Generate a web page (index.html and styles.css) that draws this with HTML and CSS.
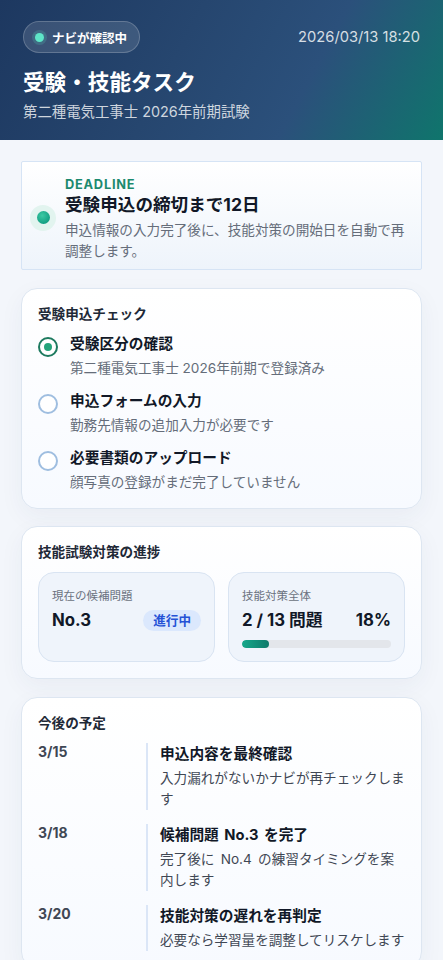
FILE: index.html
```html
<!DOCTYPE html>
<html lang="ja">
<head>
<meta charset="utf-8">
<meta name="viewport" content="width=device-width, initial-scale=1">
<title>受験・技能タスク</title>
<link rel="stylesheet" href="styles.css">
</head>
<body>
<header class="hero">
  <div class="hero-top">
    <div class="status-pill"><span class="status-dot"></span><span>ナビが確認中</span></div>
    <div class="hero-date">2026/03/13 18:20</div>
  </div>
  <h1 class="hero-title">受験・技能タスク</h1>
  <p class="hero-sub">第二種電気工事士 2026年前期試験</p>
</header>

<main class="content">
  <section class="deadline">
    <div class="deadline-mark"><span class="deadline-dot"></span></div>
    <div class="deadline-body">
      <div class="deadline-label">DEADLINE</div>
      <div class="deadline-title">受験申込の締切まで12日</div>
      <p class="deadline-desc">申込情報の入力完了後に、技能対策の開始日を自動で再調整します。</p>
    </div>
  </section>

  <section class="card">
    <h2 class="card-title">受験申込チェック</h2>
    <ul class="checklist">
      <li class="check-item">
        <span class="check-circle is-done"></span>
        <div>
          <div class="item-title">受験区分の確認</div>
          <div class="item-desc">第二種電気工事士 2026年前期で登録済み</div>
        </div>
      </li>
      <li class="check-item">
        <span class="check-circle"></span>
        <div>
          <div class="item-title">申込フォームの入力</div>
          <div class="item-desc">勤務先情報の追加入力が必要です</div>
        </div>
      </li>
      <li class="check-item">
        <span class="check-circle"></span>
        <div>
          <div class="item-title">必要書類のアップロード</div>
          <div class="item-desc">顔写真の登録がまだ完了していません</div>
        </div>
      </li>
    </ul>
  </section>

  <section class="card">
    <h2 class="card-title">技能試験対策の進捗</h2>
    <div class="stats">
      <div class="stat">
        <div class="stat-label">現在の候補問題</div>
        <div class="stat-row">
          <span class="stat-value">No.3</span>
          <span class="tag">進行中</span>
        </div>
      </div>
      <div class="stat">
        <div class="stat-label">技能対策全体</div>
        <div class="stat-row">
          <span class="stat-value">2 / 13 問題</span>
          <span class="stat-value">18%</span>
        </div>
        <div class="bar"><div class="bar-fill" style="width:18%"></div></div>
      </div>
    </div>
  </section>

  <section class="card">
    <h2 class="card-title">今後の予定</h2>
    <ol class="schedule">
      <li class="sched-row">
        <div class="sched-date">3/15</div>
        <div class="sched-body">
          <div class="item-title">申込内容を最終確認</div>
          <div class="sched-desc">入力漏れがないかナビが再チェックします</div>
        </div>
      </li>
      <li class="sched-row">
        <div class="sched-date">3/18</div>
        <div class="sched-body">
          <div class="item-title">候補問題 No.3 を完了</div>
          <div class="sched-desc">完了後に No.4 の練習タイミングを案内します</div>
        </div>
      </li>
      <li class="sched-row">
        <div class="sched-date">3/20</div>
        <div class="sched-body">
          <div class="item-title">技能対策の遅れを再判定</div>
          <div class="sched-desc">必要なら学習量を調整してリスケします</div>
        </div>
      </li>
    </ol>
  </section>
</main>
</body>
</html>
```

FILE: styles.css
```css
* { box-sizing: border-box; }

body {
  margin: 0;
  background: #f3f6fb;
  font-family: Inter, "Noto Sans CJK JP", sans-serif;
  color: #111827;
}

.hero {
  padding: 21px 23px 18px 23px;
  background: linear-gradient(118deg, #1d3860 0%, #26466f 40%, #2b507b 68%, #0f756c 100%);
  color: #fff;
}

.hero-top {
  display: flex;
  justify-content: space-between;
  align-items: center;
}

.status-pill {
  display: flex;
  align-items: center;
  gap: 8px;
  height: 32px;
  padding: 0 12px 0 11px;
  border-radius: 16px;
  background: rgba(255, 255, 255, 0.12);
  border: 1px solid rgba(255, 255, 255, 0.2);
  font-size: 12.5px;
  font-weight: 700;
}

.status-dot {
  width: 9px;
  height: 9px;
  border-radius: 50%;
  background: #5ee6c8;
  box-shadow: 0 0 0 3px rgba(94, 230, 200, 0.18);
}

.hero-date {
  font-size: 14.7px;
  color: rgba(255, 255, 255, 0.82);
}

.hero-title {
  margin: 14px 0 0;
  font-size: 21.6px;
  line-height: 30px;
  font-weight: 700;
}

.hero-sub {
  margin: 5px 0 0;
  font-size: 14.4px;
  line-height: 20px;
  color: rgba(255, 255, 255, 0.78);
}

.content {
  display: flex;
  flex-direction: column;
  gap: 17.5px;
  padding: 21px 21px 30px;
}

.deadline {
  display: flex;
  align-items: center;
  gap: 9px;
  padding: 15px 16px 7px 8px;
  border: 1px solid #d6e4f5;
  border-radius: 2px;
  background: linear-gradient(180deg, #ffffff 0%, #eef4fb 100%);
}

.deadline-mark {
  flex: none;
  width: 26px;
  height: 26px;
  margin-top: -4px;
  border-radius: 50%;
  background: #e2f4ef;
  display: flex;
  align-items: center;
  justify-content: center;
}

.deadline-dot {
  width: 13px;
  height: 13px;
  border-radius: 50%;
  background: radial-gradient(circle at 40% 35%, #3cc9a3 0%, #13a083 70%, #0f8f74 100%);
}

.deadline-label {
  font-size: 12.8px;
  line-height: 16px;
  font-weight: 700;
  letter-spacing: 0.06em;
  color: #1c8a6e;
}

.deadline-title {
  font-size: 17.6px;
  line-height: 24px;
  font-weight: 700;
  color: #111827;
}

.deadline-desc {
  margin: 3px 0 0;
  font-size: 13.6px;
  line-height: 21px;
  color: #656d7a;
}

.card {
  padding: 15px 16px 16px;
  border: 1px solid #dde6f1;
  border-radius: 16px;
  background: linear-gradient(180deg, #ffffff 0%, #f7faff 100%);
  box-shadow: 0 8px 24px rgba(30, 58, 95, 0.05);
}

.card-title {
  margin: 0;
  font-size: 13.6px;
  line-height: 20px;
  font-weight: 700;
  color: #1f2937;
}

.checklist {
  list-style: none;
  margin: 9px 0 0;
  padding: 0;
  display: flex;
  flex-direction: column;
  gap: 12px;
}

.check-item {
  display: flex;
  align-items: flex-start;
  gap: 12px;
}

.check-circle {
  flex: none;
  width: 20px;
  height: 20px;
  margin-top: 4px;
  border-radius: 50%;
  border: 2px solid #9fbee0;
  background: #fff;
  display: flex;
  align-items: center;
  justify-content: center;
}

.check-circle.is-done {
  border-color: #1d7a5f;
}

.check-circle.is-done::after {
  content: "";
  width: 8px;
  height: 8px;
  border-radius: 50%;
  background: #24a47b;
}

.item-title {
  font-size: 14.7px;
  line-height: 22px;
  font-weight: 700;
  color: #111827;
  word-spacing: 2px;
}

.item-desc {
  margin-top: 3px;
  font-size: 13.6px;
  line-height: 20px;
  color: #656d7a;
}

.stats {
  margin-top: 10px;
  display: grid;
  grid-template-columns: 1fr 1fr;
  gap: 13px;
}

.stat {
  padding: 14px 13px 13px;
  border: 1px solid #d9e4f2;
  border-radius: 16px;
  background: #eff4fb;
}

.stat-label {
  font-size: 11.5px;
  line-height: 18px;
  color: #6b7280;
}

.stat-row {
  margin-top: 4px;
  display: flex;
  justify-content: space-between;
  align-items: center;
  height: 22px;
}

.stat-value {
  font-size: 16.8px;
  line-height: 22px;
  font-weight: 700;
  color: #111827;
}

.tag {
  height: 21px;
  padding: 0 10px;
  border-radius: 11px;
  background: #dbe8fd;
  color: #2452d6;
  font-size: 12.6px;
  line-height: 21px;
  font-weight: 700;
}

.bar {
  margin-top: 9px;
  height: 8px;
  border-radius: 4px;
  background: #e3e6eb;
  overflow: hidden;
}

.bar-fill {
  height: 100%;
  border-radius: 4px;
  background: linear-gradient(90deg, #16a88a 0%, #0e7a6a 100%);
}

.schedule {
  list-style: none;
  margin: 10px 0 0;
  padding: 0;
  display: flex;
  flex-direction: column;
  gap: 14px;
}

.sched-row {
  display: grid;
  grid-template-columns: 108px 1fr;
}

.sched-date {
  font-size: 14px;
  line-height: 18px;
  font-weight: 700;
  color: #3f4754;
}

.sched-body {
  border-left: 2px solid #dbe6f7;
  padding-left: 12px;
}

.sched-desc {
  margin-top: 3px;
  font-size: 13.6px;
  line-height: 21px;
  color: #3f4754;
  word-spacing: 2.5px;
}
```
